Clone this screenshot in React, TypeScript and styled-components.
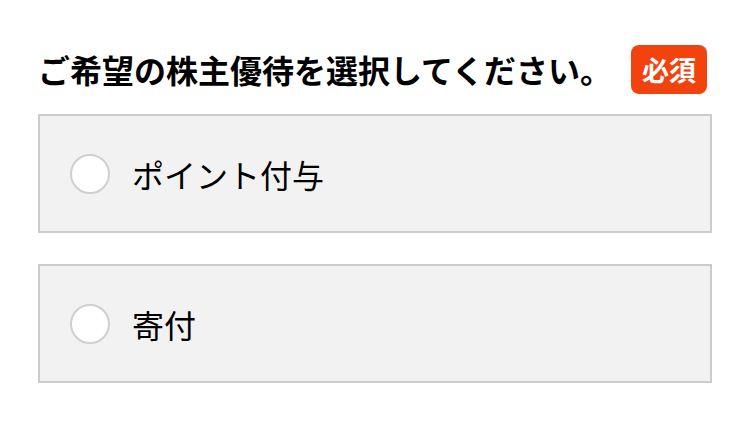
import React from "react";
import styled, { createGlobalStyle } from "styled-components";

const GlobalStyle = createGlobalStyle`
  html, body {
    margin: 0;
    padding: 0;
    background: #fff;
  }
  body {
    font-family: "Noto Sans CJK JP", "Noto Sans", sans-serif;
    color: #000;
  }
`;

const Wrapper = styled.div`
  padding: 45px 38px 0 38px;
`;

const Header = styled.div`
  display: flex;
  align-items: center;
  justify-content: space-between;
  padding-right: 5px;
  margin-bottom: 20px;
`;

const Title = styled.h2`
  margin: 0;
  font-size: 32px;
  font-weight: 700;
  line-height: 1.2;
`;

const Required = styled.span`
  display: inline-flex;
  align-items: center;
  justify-content: center;
  width: 76px;
  height: 49px;
  border-radius: 8px;
  background: #f2420e;
  color: #fff;
  font-size: 27px;
  font-weight: 700;
`;

const Options = styled.div`
  display: flex;
  flex-direction: column;
  gap: 31px;
`;

const Option = styled.label`
  display: flex;
  align-items: center;
  gap: 22px;
  height: 119px;
  box-sizing: border-box;
  padding-left: 30px;
  border: 2px solid #cccccc;
  background: #f2f2f2;
  cursor: pointer;
`;

const Radio = styled.input`
  appearance: none;
  margin: 0;
  width: 40px;
  height: 40px;
  border-radius: 50%;
  border: 2px solid #cfcfcf;
  background: #fff;
  box-sizing: border-box;
  flex-shrink: 0;
`;

const OptionLabel = styled.span`
  font-size: 32px;
  font-weight: 400;
  line-height: 1;
`;

const choices = ["ポイント付与", "寄付"];

export default function App() {
  return (
    <>
      <GlobalStyle />
      <Wrapper>
        <Header>
          <Title>ご希望の株主優待を選択してください。</Title>
          <Required>必須</Required>
        </Header>
        <Options>
          {choices.map((c) => (
            <Option key={c}>
              <Radio type="radio" name="benefit" value={c} />
              <OptionLabel>{c}</OptionLabel>
            </Option>
          ))}
        </Options>
      </Wrapper>
    </>
  );
}
